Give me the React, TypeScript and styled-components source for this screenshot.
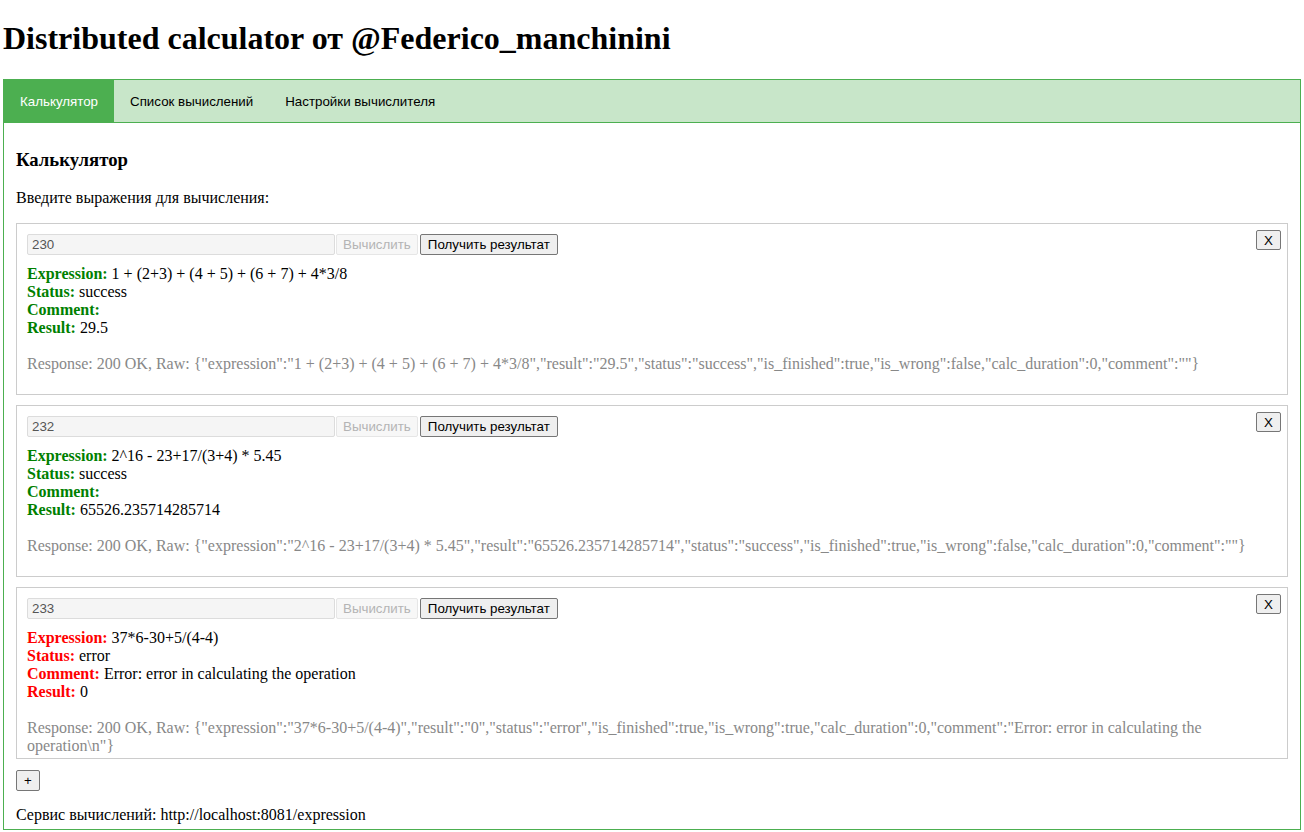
import React from "react";
import styled, { createGlobalStyle } from "styled-components";

const Global = createGlobalStyle`
  html, body { margin: 0; padding: 0; background: #fff; }
  body {
    font-family: "Liberation Serif", "Times New Roman", serif;
    font-size: 16px;
    color: #000;
  }
`;

const Page = styled.div`
  padding: 0 3px 0 3px;
  display: flex;
  flex-direction: column;
`;

const Title = styled.h1`
  margin: 20px 0 22px 0;
  font-size: 32px;
  font-weight: bold;
  line-height: 37px;
`;

const TabBar = styled.div`
  display: flex;
  height: 42px;
  background: #c8e6c9;
  border: 1px solid #4caf50;
`;

const Tab = styled.div<{ $active?: boolean }>`
  display: flex;
  align-items: center;
  padding: 0 16px;
  font-family: "Liberation Sans", Arial, sans-serif;
  font-size: 13.33px;
  color: ${(p) => (p.$active ? "#fff" : "#000")};
  background: ${(p) => (p.$active ? "#4caf50" : "transparent")};
`;

const Panel = styled.div`
  border: 1px solid #4caf50;
  border-top: none;
  padding: 0 12px 0 12px;
  display: flex;
  flex-direction: column;
`;

const Heading = styled.h3`
  font-size: 18.72px;
  font-weight: bold;
  line-height: 22px;
  margin: 26px 0 18px;
`;

const Para = styled.p`
  margin: 0 0 16px;
  line-height: 18px;
`;

const Card = styled.div`
  box-sizing: border-box;
  height: 172px;
  border: 1px solid #ccc;
  padding: 10px;
  margin-bottom: 10px;
  position: relative;
`;

const Controls = styled.div`
  display: flex;
  align-items: center;
  height: 21px;
  margin-bottom: 10px;
`;

const ExprInput = styled.input`
  box-sizing: border-box;
  width: 308px;
  height: 21px;
  padding: 1px 4px;
  border: 1px solid #dcdcdc;
  border-radius: 2px;
  background: #f5f5f5;
  color: #555;
  font-family: "Liberation Sans", Arial, sans-serif;
  font-size: 13.33px;
  outline: none;
`;

const Btn = styled.button<{ $disabled?: boolean }>`
  box-sizing: border-box;
  height: 21px;
  padding: 0 ${(p) => (p.$disabled ? "6px" : "7px")};
  margin-left: ${(p) => (p.$disabled ? "1px" : "2px")};
  font-family: "Liberation Sans", Arial, sans-serif;
  font-size: 13.33px;
  border-radius: 2px;
  border: 1px solid ${(p) => (p.$disabled ? "#e6e6e6" : "#767676")};
  background: ${(p) => (p.$disabled ? "#f7f7f7" : "#efefef")};
  color: ${(p) => (p.$disabled ? "#b4b4b4" : "#000")};
`;

const CloseBtn = styled.button`
  position: absolute;
  top: 6px;
  right: 6px;
  box-sizing: border-box;
  width: 25px;
  height: 20px;
  padding: 0;
  font-family: "Liberation Sans", Arial, sans-serif;
  font-size: 13.33px;
  border-radius: 2px;
  border: 1px solid #767676;
  background: #efefef;
  color: #000;
`;

const Line = styled.div`
  line-height: 18px;
`;

const Label = styled.b<{ $error?: boolean }>`
  color: ${(p) => (p.$error ? "#ff0000" : "#008000")};
`;

const Raw = styled.div`
  margin-top: 18px;
  line-height: 18px;
  color: #888;
`;

const AddBtn = styled.button`
  align-self: flex-start;
  box-sizing: border-box;
  width: 24px;
  height: 21px;
  margin-top: 1px;
  padding: 0;
  font-family: "Liberation Sans", Arial, sans-serif;
  font-size: 13.33px;
  border-radius: 2px;
  border: 1px solid #767676;
  background: #efefef;
  color: #000;
`;

const Footer = styled.p`
  margin: 15px 0 5px;
  line-height: 18px;
`;

type Item = {
  id: string;
  expression: string;
  status: string;
  comment: string;
  result: string;
  raw: string;
  error?: boolean;
};

const items: Item[] = [
  {
    id: "230",
    expression: "1 + (2+3) + (4 + 5) + (6 + 7) + 4*3/8",
    status: "success",
    comment: "",
    result: "29.5",
    raw: '{"expression":"1 + (2+3) + (4 + 5) + (6 + 7) + 4*3/8","result":"29.5","status":"success","is_finished":true,"is_wrong":false,"calc_duration":0,"comment":""}',
  },
  {
    id: "232",
    expression: "2^16 - 23+17/(3+4) * 5.45",
    status: "success",
    comment: "",
    result: "65526.235714285714",
    raw: '{"expression":"2^16 - 23+17/(3+4) * 5.45","result":"65526.235714285714","status":"success","is_finished":true,"is_wrong":false,"calc_duration":0,"comment":""}',
  },
  {
    id: "233",
    expression: "37*6-30+5/(4-4)",
    status: "error",
    comment: "Error: error in calculating the operation",
    result: "0",
    raw: '{"expression":"37*6-30+5/(4-4)","result":"0","status":"error","is_finished":true,"is_wrong":true,"calc_duration":0,"comment":"Error: error in calculating the operation\\n"}',
    error: true,
  },
];

export default function App() {
  return (
    <>
      <Global />
      <Page>
        <Title>Distributed calculator от @Federico_manchinini</Title>
        <TabBar>
          <Tab $active>Калькулятор</Tab>
          <Tab>Список вычислений</Tab>
          <Tab>Настройки вычислителя</Tab>
        </TabBar>
        <Panel>
          <Heading>Калькулятор</Heading>
          <Para>Введите выражения для вычисления:</Para>
          {items.map((it) => (
            <Card key={it.id}>
              <CloseBtn>X</CloseBtn>
              <Controls>
                <ExprInput defaultValue={it.id} />
                <Btn $disabled disabled>
                  Вычислить
                </Btn>
                <Btn>Получить результат</Btn>
              </Controls>
              <Line>
                <Label $error={it.error}>Expression:</Label> {it.expression}
              </Line>
              <Line>
                <Label $error={it.error}>Status:</Label> {it.status}
              </Line>
              <Line>
                <Label $error={it.error}>Comment:</Label> {it.comment}
              </Line>
              <Line>
                <Label $error={it.error}>Result:</Label> {it.result}
              </Line>
              <Raw>Response: 200 OK, Raw: {it.raw}</Raw>
            </Card>
          ))}
          <AddBtn>+</AddBtn>
          <Footer>Сервис вычислений: http://localhost:8081/expression</Footer>
        </Panel>
      </Page>
    </>
  );
}
